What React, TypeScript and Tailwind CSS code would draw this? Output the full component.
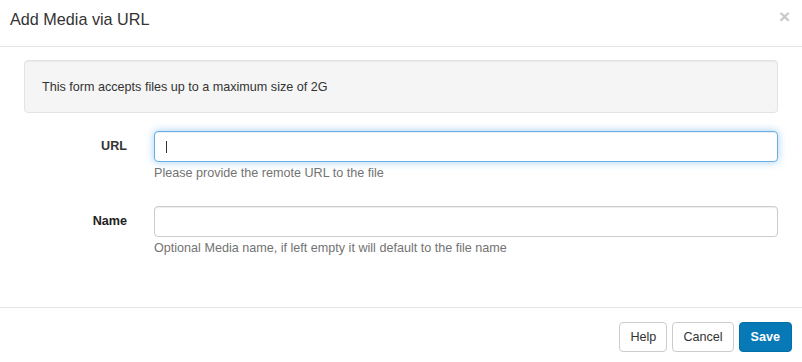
export default function App() {
    return (
        <div className="w-[802px] h-[362px] bg-white text-[#333] font-['Liberation_Sans',Arial,sans-serif] flex flex-col overflow-hidden">
            {/* header */}
            <div className="h-[47px] shrink-0 border-b border-[#e5e5e5] flex items-start justify-between pl-[10px] pr-[12px] pt-[8px]">
                <h4 className="text-[16.2px] leading-[23px] text-[#333]">Add Media via URL</h4>
                <button type="button" className="text-[19px] leading-[17px] font-bold text-[#c8c8c8]">×</button>
            </div>

            {/* body */}
            <div className="flex-1 px-[24px] pt-[13px]">
                <div className="h-[53px] bg-[#f5f5f5] border border-[#e3e3e3] rounded-[4px] shadow-[inset_0_1px_1px_rgba(0,0,0,0.05)] flex items-center px-[17px] text-[12.6px] leading-[18px]">
                    This form accepts files up to a maximum size of 2G
                </div>

                <div className="flex mt-[18px]">
                    <label className="w-[118px] shrink-0 text-right pr-[15px] pt-[6px] text-[12.6px] leading-[18px] font-bold text-[#333]">URL</label>
                    <div className="flex-1 ml-[12px]">
                        <div className="relative">
                            <input type="text" className="w-full h-[31px] rounded-[4px] border border-[#66afe9] bg-white px-[11px] text-[12.6px] outline-none shadow-[inset_0_1px_1px_rgba(0,0,0,0.075),0_0_8px_rgba(102,175,233,0.6)]" />
                            <span className="absolute left-[12px] top-[10px] w-px h-[12px] bg-[#333]"></span>
                        </div>
                        <p className="mt-[2px] text-[12.6px] leading-[18px] text-[#737373]">Please provide the remote URL to the file</p>
                    </div>
                </div>

                <div className="flex mt-[24px]">
                    <label className="w-[118px] shrink-0 text-right pr-[15px] pt-[6px] text-[12.6px] leading-[18px] font-bold text-[#222]">Name</label>
                    <div className="flex-1 ml-[12px]">
                        <input type="text" className="w-full h-[31px] rounded-[4px] border border-[#ccc] bg-white px-[11px] text-[12.6px] outline-none shadow-[inset_0_1px_1px_rgba(0,0,0,0.075)]" />
                        <p className="mt-[2px] text-[12.6px] leading-[18px] text-[#737373]">Optional Media name, if left empty it will default to the file name</p>
                    </div>
                </div>
            </div>

            {/* footer */}
            <div className="h-[55px] shrink-0 border-t border-[#e5e5e5] flex justify-end items-start gap-[5px] pt-[14px] pr-[10px]">
                <button type="button" className="h-[30px] px-[10px] rounded-[4px] border border-[#ccc] bg-white text-[12.6px] text-[#333]">Help</button>
                <button type="button" className="h-[30px] px-[10px] rounded-[4px] border border-[#ccc] bg-white text-[12.6px] text-[#333]">Cancel</button>
                <button type="button" className="h-[30px] px-[11px] rounded-[4px] border border-[#006fa8] bg-[#0679b6] text-[12.6px] font-bold text-white">Save</button>
            </div>
        </div>
    );
}
